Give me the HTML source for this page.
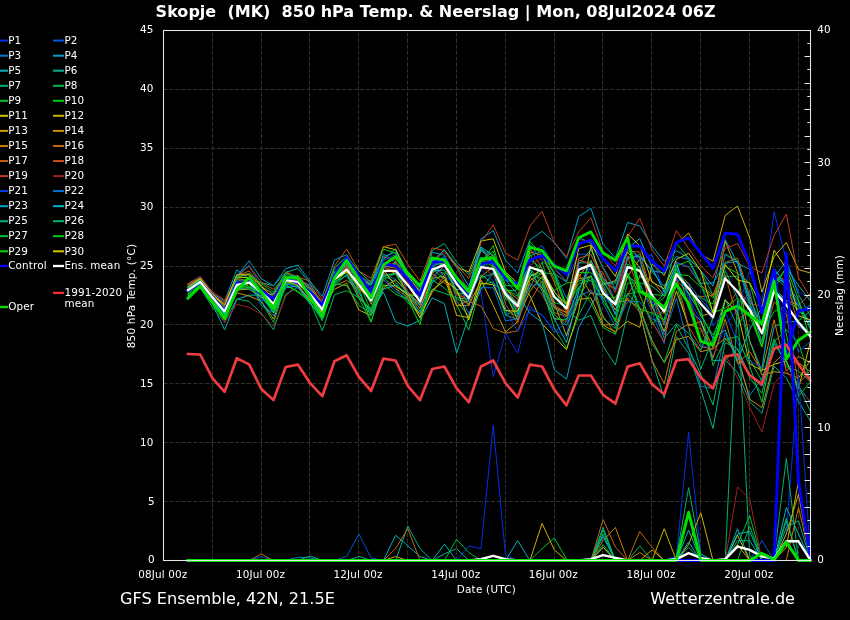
<!DOCTYPE html>
<html><head><meta charset="utf-8"><title>Skopje GFS Ensemble</title>
<style>html,body{margin:0;padding:0;background:#000;}body{width:850px;height:620px;overflow:hidden;position:relative;font-family:"DejaVu Sans","Liberation Sans",sans-serif;}</style></head>
<body>
<svg width="850" height="620" viewBox="0 0 850 620" style="position:absolute;left:0;top:0;will-change:transform">
<rect width="850" height="620" fill="#000"/>
<g stroke="#313124" stroke-width="1" stroke-dasharray="4.15 1.8" fill="none"><line x1="212.5" y1="560.5" x2="212.5" y2="30.5"/><line x1="261.5" y1="560.5" x2="261.5" y2="30.5"/><line x1="309.5" y1="560.5" x2="309.5" y2="30.5"/><line x1="358.5" y1="560.5" x2="358.5" y2="30.5"/><line x1="407.5" y1="560.5" x2="407.5" y2="30.5"/><line x1="456.5" y1="560.5" x2="456.5" y2="30.5"/><line x1="505.5" y1="560.5" x2="505.5" y2="30.5"/><line x1="554.5" y1="560.5" x2="554.5" y2="30.5"/><line x1="602.5" y1="560.5" x2="602.5" y2="30.5"/><line x1="651.5" y1="560.5" x2="651.5" y2="30.5"/><line x1="700.5" y1="560.5" x2="700.5" y2="30.5"/><line x1="749.5" y1="560.5" x2="749.5" y2="30.5"/><line x1="798.5" y1="560.5" x2="798.5" y2="30.5"/><line x1="163.5" y1="501.5" x2="810.5" y2="501.5"/><line x1="163.5" y1="442.5" x2="810.5" y2="442.5"/><line x1="163.5" y1="383.5" x2="810.5" y2="383.5"/><line x1="163.5" y1="324.5" x2="810.5" y2="324.5"/><line x1="163.5" y1="266.5" x2="810.5" y2="266.5"/><line x1="163.5" y1="207.5" x2="810.5" y2="207.5"/><line x1="163.5" y1="148.5" x2="810.5" y2="148.5"/><line x1="163.5" y1="89.5" x2="810.5" y2="89.5"/></g>
<defs><clipPath id="cp"><rect x="163.5" y="30.5" width="648.0" height="532.5"/></clipPath></defs>
<g fill="none" stroke-linejoin="round" stroke-linecap="square" clip-path="url(#cp)">
<polyline points="188.0,288.8 200.2,280.4 212.4,296.7 224.6,310.3 236.8,287.1 249.1,280.2 261.3,299.9 273.5,303.0 285.7,281.5 297.9,278.5 310.1,287.4 322.3,304.2 334.5,270.2 346.7,263.4 358.9,282.4 371.1,298.4 383.4,268.5 395.6,265.1 407.8,291.2 420.0,312.8 432.2,277.5 444.4,266.3 456.6,282.5 468.8,306.1 481.0,292.0 493.2,376.8 505.5,333.2 517.7,353.2 529.9,306.1 542.1,315.5 554.3,329.7 566.5,336.7 578.7,265.4 590.9,282.3 603.1,299.3 615.4,304.1 627.6,255.6 639.8,261.1 652.0,301.9 664.2,310.4 676.4,261.4 688.6,298.7 700.8,320.0 713.0,357.1 725.2,325.3 737.5,309.4 749.7,270.8 761.9,301.4 774.1,211.9 786.3,260.2 798.5,292.0 810.7,299.0" stroke="#0030e8" stroke-width="1.0" />
<polyline points="188.0,283.9 200.2,276.5 212.4,293.4 224.6,304.8 236.8,274.8 249.1,265.4 261.3,287.0 273.5,293.7 285.7,277.9 297.9,280.6 310.1,284.8 322.3,303.9 334.5,268.2 346.7,257.2 358.9,275.0 371.1,288.7 383.4,266.2 395.6,263.2 407.8,286.5 420.0,296.9 432.2,266.2 444.4,256.1 456.6,278.4 468.8,295.5 481.0,259.3 493.2,271.8 505.5,293.4 517.7,302.3 529.9,253.7 542.1,245.5 554.3,267.4 566.5,281.8 578.7,254.2 590.9,254.4 603.1,278.0 615.4,302.6 627.6,277.5 639.8,283.3 652.0,312.1 664.2,343.8 676.4,273.8 688.6,292.8 700.8,345.1 713.0,349.7 725.2,300.0 737.5,311.3 749.7,290.5 761.9,346.0 774.1,283.9 786.3,310.9 798.5,351.9 810.7,341.1" stroke="#0058dc" stroke-width="1.0" />
<polyline points="188.0,290.2 200.2,282.3 212.4,299.9 224.6,313.1 236.8,287.0 249.1,281.1 261.3,305.5 273.5,312.6 285.7,282.1 297.9,279.8 310.1,297.9 322.3,314.2 334.5,276.6 346.7,259.6 358.9,280.2 371.1,300.3 383.4,274.0 395.6,279.5 407.8,292.4 420.0,305.8 432.2,265.9 444.4,262.5 456.6,281.1 468.8,290.0 481.0,249.9 493.2,255.6 505.5,279.9 517.7,284.6 529.9,244.2 542.1,260.8 554.3,271.8 566.5,298.4 578.7,270.7 590.9,262.8 603.1,292.0 615.4,305.8 627.6,266.6 639.8,267.4 652.0,295.4 664.2,334.9 676.4,298.1 688.6,346.7 700.8,386.2 713.0,388.6 725.2,333.0 737.5,361.9 749.7,395.4 761.9,378.5 774.1,344.4 786.3,361.0 798.5,385.9 810.7,403.2" stroke="#0078d0" stroke-width="1.0" />
<polyline points="188.0,286.7 200.2,278.8 212.4,293.3 224.6,301.0 236.8,269.8 249.1,278.9 261.3,291.6 273.5,304.7 285.7,280.1 297.9,281.3 310.1,298.3 322.3,318.7 334.5,279.0 346.7,270.8 358.9,287.5 371.1,292.5 383.4,253.9 395.6,262.6 407.8,272.4 420.0,290.1 432.2,252.4 444.4,255.1 456.6,277.6 468.8,289.5 481.0,239.0 493.2,230.7 505.5,260.2 517.7,273.1 529.9,240.1 542.1,231.3 554.3,242.5 566.5,258.4 578.7,216.6 590.9,208.3 603.1,244.3 615.4,257.8 627.6,222.5 639.8,226.0 652.0,246.0 664.2,261.3 676.4,250.7 688.6,257.8 700.8,270.8 713.0,286.1 725.2,239.5 737.5,263.3 749.7,269.3 761.9,309.9 774.1,277.0 786.3,261.3 798.5,294.6 810.7,316.4" stroke="#00a0c8" stroke-width="1.0" />
<polyline points="188.0,287.7 200.2,283.5 212.4,303.5 224.6,330.0 236.8,299.3 249.1,295.2 261.3,295.1 273.5,312.6 285.7,284.8 297.9,281.7 310.1,289.7 322.3,305.9 334.5,273.1 346.7,267.2 358.9,296.0 371.1,310.8 383.4,292.0 395.6,322.0 407.8,326.1 420.0,320.2 432.2,297.9 444.4,303.7 456.6,353.2 468.8,316.1 481.0,289.6 493.2,272.6 505.5,309.3 517.7,316.9 529.9,267.6 542.1,269.9 554.3,291.4 566.5,309.2 578.7,264.3 590.9,249.4 603.1,278.2 615.4,289.6 627.6,258.7 639.8,254.5 652.0,271.6 664.2,286.4 676.4,261.9 688.6,308.7 700.8,320.7 713.0,360.6 725.2,359.9 737.5,349.0 749.7,375.7 761.9,386.2 774.1,326.6 786.3,322.1 798.5,321.2 810.7,334.1" stroke="#00b0b8" stroke-width="1.0" />
<polyline points="188.0,290.1 200.2,281.9 212.4,300.3 224.6,314.6 236.8,291.6 249.1,280.1 261.3,282.8 273.5,285.7 285.7,272.4 297.9,268.5 310.1,283.5 322.3,304.7 334.5,274.3 346.7,261.4 358.9,282.2 371.1,285.1 383.4,259.6 395.6,248.8 407.8,272.5 420.0,285.3 432.2,267.2 444.4,259.7 456.6,299.7 468.8,301.8 481.0,265.7 493.2,262.3 505.5,287.4 517.7,305.0 529.9,259.8 542.1,268.3 554.3,296.6 566.5,303.4 578.7,262.8 590.9,262.8 603.1,290.9 615.4,313.9 627.6,274.2 639.8,313.2 652.0,360.3 664.2,398.0 676.4,336.7 688.6,353.2 700.8,389.7 713.0,428.6 725.2,360.3 737.5,372.1 749.7,401.5 761.9,413.3 774.1,366.2 786.3,377.9 798.5,401.5 810.7,421.5" stroke="#00b090" stroke-width="1.0" />
<polyline points="188.0,295.9 200.2,287.5 212.4,307.3 224.6,322.0 236.8,299.0 249.1,301.4 261.3,313.2 273.5,329.7 285.7,294.3 297.9,287.3 310.1,304.3 322.3,313.0 334.5,275.2 346.7,257.3 358.9,284.5 371.1,298.3 383.4,267.4 395.6,263.1 407.8,275.5 420.0,286.6 432.2,250.6 444.4,243.5 456.6,262.2 468.8,274.9 481.0,246.7 493.2,266.2 505.5,315.1 517.7,319.4 529.9,276.2 542.1,272.6 554.3,274.2 566.5,309.5 578.7,320.2 590.9,315.5 603.1,346.1 615.4,365.0 627.6,313.2 639.8,275.0 652.0,293.6 664.2,322.8 676.4,285.1 688.6,327.5 700.8,369.1 713.0,338.3 725.2,299.1 737.5,326.7 749.7,305.3 761.9,341.9 774.1,276.2 786.3,287.7 798.5,313.7 810.7,304.5" stroke="#00b070" stroke-width="1.0" />
<polyline points="188.0,287.8 200.2,280.5 212.4,296.0 224.6,315.0 236.8,285.1 249.1,279.1 261.3,286.8 273.5,305.4 285.7,281.9 297.9,286.7 310.1,301.6 322.3,330.7 334.5,294.7 346.7,290.7 358.9,297.8 371.1,322.3 383.4,277.4 395.6,288.6 407.8,302.8 420.0,313.4 432.2,280.0 444.4,287.9 456.6,301.2 468.8,316.1 481.0,277.6 493.2,273.8 505.5,292.4 517.7,310.4 529.9,272.6 542.1,287.0 554.3,328.1 566.5,348.3 578.7,315.1 590.9,291.5 603.1,296.6 615.4,322.1 627.6,275.9 639.8,285.2 652.0,306.8 664.2,293.6 676.4,243.3 688.6,258.0 700.8,270.8 713.0,295.2 725.2,276.4 737.5,276.3 749.7,359.4 761.9,380.8 774.1,338.8 786.3,366.6 798.5,371.1 810.7,382.1" stroke="#00b850" stroke-width="1.0" />
<polyline points="188.0,294.8 200.2,284.8 212.4,301.0 224.6,313.9 236.8,285.0 249.1,282.9 261.3,290.6 273.5,312.6 285.7,284.2 297.9,279.5 310.1,290.3 322.3,306.6 334.5,282.6 346.7,271.8 358.9,283.4 371.1,310.7 383.4,285.3 395.6,285.7 407.8,295.2 420.0,296.2 432.2,268.6 444.4,279.3 456.6,304.5 468.8,330.1 481.0,284.1 493.2,282.1 505.5,314.5 517.7,310.1 529.9,287.8 542.1,262.2 554.3,302.7 566.5,305.9 578.7,287.2 590.9,276.1 603.1,293.1 615.4,305.3 627.6,294.2 639.8,291.2 652.0,294.6 664.2,295.3 676.4,268.6 688.6,294.2 700.8,297.7 713.0,304.0 725.2,254.0 737.5,261.0 749.7,302.6 761.9,333.6 774.1,311.4 786.3,305.7 798.5,320.9 810.7,310.7" stroke="#00c030" stroke-width="1.0" />
<polyline points="188.0,289.1 200.2,280.3 212.4,295.3 224.6,309.8 236.8,278.5 249.1,280.8 261.3,290.9 273.5,307.4 285.7,282.3 297.9,286.1 310.1,289.6 322.3,308.0 334.5,276.4 346.7,272.6 358.9,298.7 371.1,308.5 383.4,276.6 395.6,272.8 407.8,293.8 420.0,297.4 432.2,260.6 444.4,259.3 456.6,282.0 468.8,304.0 481.0,263.4 493.2,245.6 505.5,291.1 517.7,289.8 529.9,254.6 542.1,274.8 554.3,290.5 566.5,283.0 578.7,281.3 590.9,276.5 603.1,300.6 615.4,320.1 627.6,264.2 639.8,269.9 652.0,306.4 664.2,297.8 676.4,273.9 688.6,275.8 700.8,286.9 713.0,297.8 725.2,266.3 737.5,273.3 749.7,283.0 761.9,326.1 774.1,287.6 786.3,300.7 798.5,309.2 810.7,326.6" stroke="#00d010" stroke-width="1.0" />
<polyline points="188.0,284.8 200.2,278.3 212.4,293.9 224.6,307.3 236.8,277.4 249.1,277.5 261.3,292.1 273.5,295.1 285.7,280.5 297.9,278.1 310.1,292.9 322.3,310.7 334.5,276.0 346.7,264.5 358.9,279.2 371.1,284.3 383.4,246.6 395.6,249.8 407.8,275.7 420.0,291.7 432.2,261.3 444.4,250.0 456.6,267.1 468.8,272.1 481.0,241.0 493.2,238.8 505.5,272.0 517.7,283.4 529.9,295.5 542.1,323.8 554.3,336.7 566.5,349.7 578.7,310.8 590.9,246.0 603.1,284.8 615.4,280.7 627.6,252.0 639.8,267.5 652.0,306.8 664.2,331.3 676.4,291.1 688.6,325.7 700.8,321.6 713.0,347.7 725.2,300.3 737.5,312.1 749.7,363.9 761.9,370.3 774.1,364.3 786.3,361.0 798.5,388.7 810.7,340.5" stroke="#c8c800" stroke-width="1.0" />
<polyline points="188.0,289.4 200.2,283.4 212.4,299.3 224.6,320.2 236.8,290.0 249.1,289.1 261.3,297.4 273.5,298.4 285.7,276.3 297.9,283.4 310.1,294.5 322.3,309.2 334.5,289.2 346.7,283.3 358.9,310.0 371.1,315.5 383.4,287.9 395.6,279.7 407.8,292.3 420.0,308.5 432.2,278.3 444.4,276.2 456.6,315.3 468.8,317.6 481.0,276.8 493.2,266.7 505.5,293.9 517.7,320.0 529.9,290.9 542.1,276.5 554.3,303.3 566.5,335.8 578.7,299.4 590.9,297.9 603.1,325.4 615.4,331.6 627.6,321.3 639.8,327.4 652.0,263.7 664.2,275.5 676.4,243.7 688.6,233.1 700.8,254.3 713.0,261.3 725.2,215.4 737.5,206.0 749.7,237.8 761.9,292.0 774.1,256.6 786.3,242.5 798.5,269.6 810.7,273.1" stroke="#c8b000" stroke-width="1.0" />
<polyline points="188.0,289.0 200.2,282.8 212.4,300.7 224.6,318.1 236.8,292.8 249.1,296.1 261.3,301.0 273.5,319.1 285.7,283.5 297.9,280.4 310.1,296.6 322.3,311.2 334.5,279.1 346.7,266.3 358.9,288.7 371.1,299.3 383.4,266.6 395.6,273.9 407.8,292.8 420.0,303.5 432.2,268.7 444.4,273.8 456.6,305.8 468.8,305.3 481.0,280.3 493.2,305.4 505.5,332.1 517.7,321.5 529.9,280.5 542.1,273.2 554.3,307.4 566.5,312.6 578.7,276.9 590.9,260.4 603.1,288.0 615.4,310.0 627.6,276.3 639.8,259.1 652.0,294.4 664.2,313.3 676.4,272.6 688.6,283.5 700.8,316.1 713.0,312.6 725.2,241.4 737.5,272.4 749.7,340.7 761.9,375.0 774.1,371.7 786.3,373.2 798.5,378.1 810.7,359.8" stroke="#c8a000" stroke-width="1.0" />
<polyline points="188.0,291.3 200.2,280.6 212.4,295.5 224.6,309.9 236.8,278.6 249.1,286.9 261.3,291.9 273.5,303.4 285.7,277.6 297.9,278.8 310.1,288.2 322.3,303.4 334.5,272.8 346.7,265.6 358.9,289.8 371.1,293.4 383.4,263.2 395.6,264.9 407.8,297.8 420.0,314.5 432.2,292.7 444.4,276.0 456.6,305.9 468.8,300.4 481.0,263.1 493.2,260.9 505.5,289.4 517.7,299.0 529.9,277.0 542.1,288.1 554.3,308.1 566.5,315.6 578.7,274.0 590.9,293.4 603.1,294.7 615.4,303.0 627.6,300.0 639.8,307.8 652.0,340.3 664.2,362.8 676.4,339.5 688.6,336.4 700.8,351.7 713.0,348.7 725.2,337.8 737.5,355.4 749.7,399.2 761.9,407.7 774.1,362.6 786.3,351.3 798.5,362.6 810.7,372.1" stroke="#c89000" stroke-width="1.0" />
<polyline points="188.0,290.4 200.2,281.7 212.4,299.4 224.6,317.8 236.8,286.9 249.1,280.4 261.3,290.8 273.5,304.5 285.7,284.1 297.9,275.2 310.1,290.3 322.3,311.3 334.5,285.7 346.7,280.5 358.9,289.0 371.1,297.1 383.4,265.3 395.6,268.4 407.8,277.7 420.0,294.2 432.2,262.1 444.4,264.5 456.6,294.0 468.8,304.9 481.0,266.6 493.2,268.8 505.5,291.4 517.7,303.4 529.9,252.0 542.1,255.1 554.3,282.0 566.5,314.0 578.7,278.9 590.9,276.3 603.1,324.9 615.4,324.4 627.6,297.9 639.8,312.0 652.0,360.5 664.2,383.5 676.4,331.3 688.6,324.1 700.8,328.8 713.0,358.0 725.2,319.2 737.5,363.6 749.7,351.7 761.9,371.5 774.1,319.8 786.3,371.0 798.5,356.5 810.7,362.7" stroke="#c87800" stroke-width="1.0" />
<polyline points="188.0,286.9 200.2,280.8 212.4,294.8 224.6,302.9 236.8,276.1 249.1,271.0 261.3,286.1 273.5,294.3 285.7,276.1 297.9,284.6 310.1,294.3 322.3,307.3 334.5,277.2 346.7,266.1 358.9,280.9 371.1,304.6 383.4,274.6 395.6,261.3 407.8,281.2 420.0,295.0 432.2,277.3 444.4,266.0 456.6,292.3 468.8,301.1 481.0,306.1 493.2,328.5 505.5,333.2 517.7,330.8 529.9,301.4 542.1,281.1 554.3,312.7 566.5,316.4 578.7,297.1 590.9,290.0 603.1,315.9 615.4,334.3 627.6,294.3 639.8,277.0 652.0,280.6 664.2,295.1 676.4,262.3 688.6,267.2 700.8,285.1 713.0,295.5 725.2,262.4 737.5,258.1 749.7,295.5 761.9,332.8 774.1,293.0 786.3,300.5 798.5,305.1 810.7,293.2" stroke="#c06810" stroke-width="1.0" />
<polyline points="188.0,294.1 200.2,281.5 212.4,295.9 224.6,309.1 236.8,276.9 249.1,266.1 261.3,282.3 273.5,289.4 285.7,276.0 297.9,278.4 310.1,286.2 322.3,301.9 334.5,265.8 346.7,249.1 358.9,271.0 371.1,278.5 383.4,246.6 395.6,244.2 407.8,264.4 420.0,280.9 432.2,247.9 444.4,250.4 456.6,264.7 468.8,278.5 481.0,251.0 493.2,258.6 505.5,304.3 517.7,323.2 529.9,283.1 542.1,294.4 554.3,318.1 566.5,321.7 578.7,258.4 590.9,254.3 603.1,280.0 615.4,290.9 627.6,250.7 639.8,252.2 652.0,294.7 664.2,325.1 676.4,280.1 688.6,293.1 700.8,296.7 713.0,295.4 725.2,274.7 737.5,319.2 749.7,311.7 761.9,347.0 774.1,301.8 786.3,314.2 798.5,383.9 810.7,370.2" stroke="#c05810" stroke-width="1.0" />
<polyline points="188.0,284.5 200.2,279.7 212.4,293.1 224.6,305.1 236.8,275.4 249.1,273.7 261.3,291.0 273.5,304.6 285.7,271.6 297.9,277.1 310.1,281.2 322.3,299.6 334.5,275.4 346.7,268.9 358.9,296.0 371.1,312.3 383.4,280.3 395.6,288.1 407.8,297.8 420.0,307.4 432.2,273.4 444.4,283.1 456.6,283.6 468.8,294.2 481.0,263.7 493.2,254.9 505.5,297.9 517.7,302.4 529.9,248.2 542.1,268.7 554.3,305.3 566.5,312.8 578.7,260.2 590.9,263.5 603.1,273.0 615.4,301.5 627.6,256.3 639.8,295.5 652.0,321.9 664.2,341.8 676.4,277.5 688.6,326.7 700.8,347.0 713.0,349.0 725.2,313.1 737.5,290.1 749.7,303.5 761.9,306.2 774.1,276.0 786.3,280.1 798.5,326.8 810.7,333.0" stroke="#c84a1c" stroke-width="1.0" />
<polyline points="188.0,283.7 200.2,276.5 212.4,291.8 224.6,299.9 236.8,279.3 249.1,281.1 261.3,293.6 273.5,306.7 285.7,280.7 297.9,276.5 310.1,292.3 322.3,310.2 334.5,278.0 346.7,267.2 358.9,278.0 371.1,281.0 383.4,257.1 395.6,259.8 407.8,293.4 420.0,295.3 432.2,273.9 444.4,263.0 456.6,294.5 468.8,299.5 481.0,242.5 493.2,224.8 505.5,253.1 517.7,260.2 529.9,226.0 542.1,211.3 554.3,242.5 566.5,256.6 578.7,231.9 590.9,217.8 603.1,251.9 615.4,266.1 627.6,236.6 639.8,218.4 652.0,249.6 664.2,266.1 676.4,230.7 688.6,248.4 700.8,266.1 713.0,277.8 725.2,248.4 737.5,243.7 749.7,266.1 761.9,273.1 774.1,235.4 786.3,214.2 798.5,277.8 810.7,297.9" stroke="#c03c20" stroke-width="1.0" />
<polyline points="188.0,289.7 200.2,283.5 212.4,299.0 224.6,322.6 236.8,304.3 249.1,307.3 261.3,314.3 273.5,326.1 285.7,296.7 297.9,281.0 310.1,291.3 322.3,309.6 334.5,277.6 346.7,262.5 358.9,278.5 371.1,298.8 383.4,267.7 395.6,270.8 407.8,282.3 420.0,301.1 432.2,263.3 444.4,252.2 456.6,267.9 468.8,292.5 481.0,266.9 493.2,275.3 505.5,289.7 517.7,309.2 529.9,265.4 542.1,257.7 554.3,269.7 566.5,280.9 578.7,239.6 590.9,241.2 603.1,268.8 615.4,293.1 627.6,256.4 639.8,257.3 652.0,312.3 664.2,313.7 676.4,287.1 688.6,299.9 700.8,327.6 713.0,346.8 725.2,354.4 737.5,377.9 749.7,407.4 761.9,432.1 774.1,383.8 786.3,369.7 798.5,389.7 810.7,401.5" stroke="#a02020" stroke-width="1.0" />
<polyline points="188.0,286.3 200.2,279.5 212.4,297.0 224.6,309.2 236.8,276.9 249.1,274.5 261.3,291.0 273.5,310.0 285.7,286.5 297.9,285.5 310.1,302.4 322.3,317.5 334.5,282.4 346.7,260.9 358.9,277.1 371.1,282.5 383.4,260.7 395.6,254.5 407.8,279.8 420.0,293.1 432.2,265.7 444.4,276.2 456.6,284.4 468.8,302.3 481.0,269.2 493.2,281.0 505.5,310.3 517.7,331.4 529.9,309.3 542.1,314.6 554.3,332.2 566.5,322.0 578.7,295.3 590.9,291.2 603.1,298.4 615.4,289.7 627.6,245.9 639.8,260.4 652.0,254.7 664.2,295.1 676.4,262.7 688.6,266.5 700.8,283.8 713.0,325.8 725.2,311.3 737.5,343.3 749.7,361.3 761.9,367.4 774.1,288.9 786.3,301.2 798.5,325.6 810.7,336.4" stroke="#0040e0" stroke-width="1.0" />
<polyline points="188.0,289.6 200.2,279.6 212.4,296.2 224.6,308.4 236.8,281.0 249.1,281.4 261.3,302.2 273.5,315.9 285.7,283.1 297.9,288.0 310.1,299.9 322.3,310.5 334.5,278.7 346.7,264.8 358.9,277.7 371.1,297.6 383.4,279.3 395.6,291.5 407.8,299.0 420.0,311.7 432.2,282.1 444.4,258.0 456.6,291.5 468.8,313.5 481.0,287.8 493.2,287.7 505.5,320.8 517.7,318.9 529.9,285.2 542.1,284.8 554.3,306.4 566.5,319.6 578.7,289.4 590.9,266.9 603.1,303.2 615.4,326.7 627.6,301.7 639.8,301.7 652.0,318.7 664.2,325.1 676.4,279.4 688.6,283.6 700.8,299.5 713.0,313.2 725.2,254.5 737.5,263.2 749.7,306.5 761.9,321.9 774.1,269.8 786.3,284.7 798.5,304.5 810.7,324.6" stroke="#0070d8" stroke-width="1.0" />
<polyline points="188.0,287.3 200.2,279.7 212.4,296.7 224.6,317.6 236.8,276.7 249.1,260.8 261.3,278.7 273.5,285.9 285.7,268.6 297.9,265.1 310.1,281.4 322.3,296.4 334.5,260.1 346.7,254.6 358.9,275.1 371.1,284.4 383.4,256.7 395.6,252.2 407.8,277.5 420.0,293.4 432.2,262.3 444.4,249.8 456.6,266.1 468.8,286.1 481.0,249.0 493.2,264.1 505.5,279.7 517.7,294.7 529.9,313.2 542.1,322.6 554.3,369.7 566.5,379.1 578.7,327.3 590.9,306.1 603.1,283.7 615.4,314.9 627.6,257.5 639.8,256.5 652.0,270.7 664.2,273.0 676.4,256.7 688.6,259.0 700.8,283.3 713.0,283.0 725.2,263.2 737.5,261.2 749.7,299.3 761.9,324.1 774.1,268.3 786.3,287.1 798.5,306.6 810.7,322.7" stroke="#00a0d0" stroke-width="1.0" />
<polyline points="188.0,290.9 200.2,284.4 212.4,297.1 224.6,314.3 236.8,287.7 249.1,279.0 261.3,297.2 273.5,312.1 285.7,287.8 297.9,286.1 310.1,303.2 322.3,318.4 334.5,285.9 346.7,274.3 358.9,292.2 371.1,315.2 383.4,289.1 395.6,285.0 407.8,293.7 420.0,304.9 432.2,271.0 444.4,270.0 456.6,289.5 468.8,288.7 481.0,247.1 493.2,255.3 505.5,290.5 517.7,313.6 529.9,269.5 542.1,291.2 554.3,318.9 566.5,342.7 578.7,291.2 590.9,260.7 603.1,283.0 615.4,283.1 627.6,248.0 639.8,238.7 652.0,267.5 664.2,291.8 676.4,264.9 688.6,294.0 700.8,313.5 713.0,338.4 725.2,330.0 737.5,360.6 749.7,329.5 761.9,307.0 774.1,277.0 786.3,283.4 798.5,301.1 810.7,330.2" stroke="#00b8c0" stroke-width="1.0" />
<polyline points="188.0,287.9 200.2,281.6 212.4,296.5 224.6,310.2 236.8,288.4 249.1,288.9 261.3,295.8 273.5,293.5 285.7,274.4 297.9,276.3 310.1,289.2 322.3,307.5 334.5,272.3 346.7,263.0 358.9,284.6 371.1,302.7 383.4,275.6 395.6,273.5 407.8,286.4 420.0,293.4 432.2,260.5 444.4,258.2 456.6,281.1 468.8,294.9 481.0,274.9 493.2,283.6 505.5,292.0 517.7,304.0 529.9,255.8 542.1,251.4 554.3,273.8 566.5,281.8 578.7,237.5 590.9,243.2 603.1,267.2 615.4,289.3 627.6,247.5 639.8,257.4 652.0,303.7 664.2,338.4 676.4,323.6 688.6,333.3 700.8,350.5 713.0,318.0 725.2,270.6 737.5,298.2 749.7,340.6 761.9,370.6 774.1,285.1 786.3,267.8 798.5,285.5 810.7,301.3" stroke="#00b088" stroke-width="1.0" />
<polyline points="188.0,291.4 200.2,281.4 212.4,299.3 224.6,317.9 236.8,285.8 249.1,287.8 261.3,292.4 273.5,304.7 285.7,276.7 297.9,276.8 310.1,296.6 322.3,308.8 334.5,282.3 346.7,275.5 358.9,297.6 371.1,311.4 383.4,275.9 395.6,282.0 407.8,299.3 420.0,317.1 432.2,282.8 444.4,272.6 456.6,277.6 468.8,287.8 481.0,257.4 493.2,262.9 505.5,295.3 517.7,315.9 529.9,274.5 542.1,278.1 554.3,314.7 566.5,325.3 578.7,298.7 590.9,275.2 603.1,318.3 615.4,328.5 627.6,293.5 639.8,308.9 652.0,343.6 664.2,362.2 676.4,324.9 688.6,348.5 700.8,374.4 713.0,405.0 725.2,342.6 737.5,348.5 749.7,377.9 761.9,393.3 774.1,342.6 786.3,362.6 798.5,386.2 810.7,412.1" stroke="#00b868" stroke-width="1.0" />
<polyline points="188.0,293.9 200.2,282.4 212.4,295.9 224.6,309.4 236.8,289.1 249.1,283.7 261.3,301.7 273.5,322.4 285.7,284.6 297.9,292.3 310.1,302.0 322.3,320.7 334.5,283.8 346.7,285.7 358.9,305.7 371.1,313.2 383.4,279.1 395.6,273.7 407.8,294.7 420.0,311.4 432.2,289.1 444.4,293.3 456.6,297.7 468.8,299.3 481.0,268.7 493.2,257.2 505.5,299.4 517.7,303.8 529.9,268.4 542.1,283.2 554.3,319.0 566.5,319.8 578.7,287.8 590.9,302.7 603.1,327.6 615.4,334.2 627.6,283.2 639.8,282.8 652.0,286.3 664.2,296.0 676.4,269.9 688.6,288.2 700.8,308.1 713.0,365.5 725.2,339.8 737.5,336.6 749.7,366.0 761.9,402.1 774.1,341.7 786.3,329.8 798.5,342.1 810.7,382.7" stroke="#00c040" stroke-width="1.0" />
<polyline points="188.0,288.3 200.2,279.9 212.4,297.3 224.6,310.0 236.8,277.4 249.1,273.8 261.3,283.7 273.5,292.1 285.7,272.5 297.9,279.3 310.1,295.3 322.3,304.9 334.5,268.0 346.7,256.2 358.9,271.1 371.1,282.4 383.4,249.2 395.6,252.9 407.8,278.9 420.0,294.3 432.2,263.6 444.4,262.9 456.6,292.8 468.8,294.8 481.0,261.4 493.2,251.0 505.5,285.3 517.7,286.5 529.9,241.4 542.1,255.3 554.3,278.5 566.5,305.3 578.7,283.6 590.9,280.3 603.1,297.9 615.4,297.6 627.6,273.2 639.8,294.7 652.0,324.8 664.2,308.4 676.4,272.4 688.6,287.7 700.8,315.8 713.0,335.1 725.2,311.0 737.5,305.5 749.7,315.8 761.9,347.1 774.1,285.1 786.3,333.8 798.5,396.1 810.7,381.4" stroke="#00c818" stroke-width="1.0" />
<polyline points="188.0,293.4 200.2,283.0 212.4,296.4 224.6,308.4 236.8,287.6 249.1,286.7 261.3,292.2 273.5,312.8 285.7,285.0 297.9,291.3 310.1,300.6 322.3,314.3 334.5,284.3 346.7,270.1 358.9,288.9 371.1,321.6 383.4,284.4 395.6,294.1 407.8,299.7 420.0,324.6 432.2,273.1 444.4,260.5 456.6,276.5 468.8,292.7 481.0,259.5 493.2,266.5 505.5,288.7 517.7,296.4 529.9,248.5 542.1,249.8 554.3,273.7 566.5,304.6 578.7,272.3 590.9,272.9 603.1,281.2 615.4,301.8 627.6,273.9 639.8,308.8 652.0,313.2 664.2,319.8 676.4,265.9 688.6,261.1 700.8,284.2 713.0,312.6 725.2,308.2 737.5,298.1 749.7,309.7 761.9,346.8 774.1,289.1 786.3,267.1 798.5,299.9 810.7,341.2" stroke="#00d800" stroke-width="1.0" />
<polyline points="188.0,286.7 200.2,278.8 212.4,294.1 224.6,305.0 236.8,274.9 249.1,274.8 261.3,286.2 273.5,298.2 285.7,279.7 297.9,285.5 310.1,300.1 322.3,312.4 334.5,280.1 346.7,272.1 358.9,280.8 371.1,293.4 383.4,269.4 395.6,286.4 407.8,294.4 420.0,318.2 432.2,290.3 444.4,280.4 456.6,289.5 468.8,319.9 481.0,282.9 493.2,284.8 505.5,310.7 517.7,311.2 529.9,276.6 542.1,269.9 554.3,292.1 566.5,304.1 578.7,248.6 590.9,245.1 603.1,259.4 615.4,276.4 627.6,234.0 639.8,245.6 652.0,282.1 664.2,288.8 676.4,259.4 688.6,253.2 700.8,270.7 713.0,312.6 725.2,264.5 737.5,280.0 749.7,282.8 761.9,307.5 774.1,250.2 786.3,268.6 798.5,315.7 810.7,320.1" stroke="#d0c800" stroke-width="1.0" />
<polyline points="188.0,290.8 200.2,282.5 212.4,296.7 224.6,310.8 236.8,283.7 249.1,281.4 261.3,290.8 273.5,299.0 285.7,279.0 297.9,282.5 310.1,292.0 322.3,304.9 334.5,275.5 346.7,257.8 358.9,275.5 371.1,292.0 383.4,263.7 395.6,266.1 407.8,279.0 420.0,295.5 432.2,262.5 444.4,261.3 456.6,279.0 468.8,295.5 481.0,263.7 493.2,261.9 505.5,277.8 517.7,284.3 529.9,260.2 542.1,255.5 554.3,264.9 566.5,274.3 578.7,243.7 590.9,240.1 603.1,259.0 615.4,270.8 627.6,246.0 639.8,246.0 652.0,261.3 664.2,270.8 676.4,242.5 688.6,237.8 700.8,253.1 713.0,268.4 725.2,233.1 737.5,234.3 749.7,263.7 761.9,313.2 774.1,269.6 786.3,355.6 798.5,310.8 810.7,308.5" stroke="#0000ff" stroke-width="2.9" />
<polyline points="188.0,290.3 200.2,282.0 212.4,297.3 224.6,311.4 236.8,284.9 249.1,282.5 261.3,292.0 273.5,303.7 285.7,280.2 297.9,282.0 310.1,294.3 322.3,309.6 334.5,279.0 346.7,269.6 358.9,284.9 371.1,300.2 383.4,270.8 395.6,270.8 407.8,284.9 420.0,301.4 432.2,269.6 444.4,264.9 456.6,283.7 468.8,297.9 481.0,267.2 493.2,269.0 505.5,294.3 517.7,306.1 529.9,267.2 542.1,271.4 554.3,296.7 566.5,308.5 578.7,269.6 590.9,264.9 603.1,293.1 615.4,304.3 627.6,267.2 639.8,270.8 652.0,295.5 664.2,311.4 676.4,274.3 688.6,288.4 700.8,303.7 713.0,317.3 725.2,278.4 737.5,291.4 749.7,309.6 761.9,333.2 774.1,290.8 786.3,304.9 798.5,322.6 810.7,336.7" stroke="#ffffff" stroke-width="2.25" />
<polyline points="188.0,298.3 200.2,286.1 212.4,302.6 224.6,318.3 236.8,289.6 249.1,277.8 261.3,292.0 273.5,308.5 285.7,277.8 297.9,277.8 310.1,296.7 322.3,316.7 334.5,277.8 346.7,260.2 358.9,279.0 371.1,297.9 383.4,264.9 395.6,256.6 407.8,273.1 420.0,286.1 432.2,257.8 444.4,260.2 456.6,277.8 468.8,292.0 481.0,259.0 493.2,257.8 505.5,274.3 517.7,288.4 529.9,247.2 542.1,250.7 554.3,266.1 566.5,270.8 578.7,237.8 590.9,231.9 603.1,253.1 615.4,260.2 627.6,237.8 639.8,291.4 652.0,297.9 664.2,307.3 676.4,283.7 688.6,303.7 700.8,341.4 713.0,345.0 725.2,311.4 737.5,306.1 749.7,315.5 761.9,323.8 774.1,281.4 786.3,359.1 798.5,340.3 810.7,332.0" stroke="#00e000" stroke-width="2.9" />
<polyline points="188.0,354.0 200.2,354.5 212.4,378.1 224.6,391.8 236.8,358.2 249.1,364.4 261.3,389.0 273.5,400.1 285.7,367.0 297.9,364.6 310.1,383.2 322.3,396.2 334.5,361.2 346.7,355.3 358.9,376.8 371.1,391.0 383.4,358.6 395.6,360.5 407.8,385.8 420.0,400.1 432.2,369.0 444.4,366.5 456.6,388.4 468.8,402.2 481.0,366.5 493.2,360.5 505.5,383.2 517.7,397.5 529.9,364.6 542.1,366.5 554.3,389.7 566.5,405.3 578.7,375.5 590.9,375.5 603.1,394.9 615.4,403.7 627.6,366.6 639.8,363.2 652.0,384.3 664.2,394.2 676.4,360.5 688.6,359.2 700.8,377.7 713.0,388.3 725.2,356.5 737.5,354.4 749.7,375.1 761.9,384.3 774.1,348.6 786.3,344.6 798.5,364.5 810.7,380.3" stroke="#ee3c40" stroke-width="2.7" />
<polyline points="188.0,560.5 200.2,560.5 212.4,560.5 224.6,560.5 236.8,560.5 249.1,560.5 261.3,560.5 273.5,560.5 285.7,560.5 297.9,560.5 310.1,560.5 322.3,560.5 334.5,560.5 346.7,560.5 358.9,560.5 371.1,560.5 383.4,560.5 395.6,560.5 407.8,560.5 420.0,560.5 432.2,560.5 444.4,560.5 456.6,560.5 468.8,545.9 481.0,548.6 493.2,425.4 505.5,555.2 517.7,560.5 529.9,560.5 542.1,560.5 554.3,560.5 566.5,560.5 578.7,560.5 590.9,560.5 603.1,560.5 615.4,560.5 627.6,560.5 639.8,560.5 652.0,560.5 664.2,560.5 676.4,556.5 688.6,432.0 700.8,555.2 713.0,560.5 725.2,560.5 737.5,560.5 749.7,560.5 761.9,560.5 774.1,560.5 786.3,534.0 798.5,375.0 810.7,560.5" stroke="#0030e8" stroke-width="1.0" />
<polyline points="188.0,560.5 200.2,560.5 212.4,560.5 224.6,560.5 236.8,560.5 249.1,560.5 261.3,556.5 273.5,560.5 285.7,560.5 297.9,560.5 310.1,560.5 322.3,560.5 334.5,560.5 346.7,556.5 358.9,534.0 371.1,557.9 383.4,560.5 395.6,560.5 407.8,560.5 420.0,560.5 432.2,560.5 444.4,560.5 456.6,560.5 468.8,560.5 481.0,560.5 493.2,560.5 505.5,560.5 517.7,560.5 529.9,560.5 542.1,560.5 554.3,560.5 566.5,560.5 578.7,560.5 590.9,560.5 603.1,560.5 615.4,560.5 627.6,560.5 639.8,560.5 652.0,560.5 664.2,560.5 676.4,560.5 688.6,560.5 700.8,560.5 713.0,560.5 725.2,560.5 737.5,560.5 749.7,560.5 761.9,540.6 774.1,560.5 786.3,560.5 798.5,560.5 810.7,560.5" stroke="#0058dc" stroke-width="1.0" />
<polyline points="188.0,560.5 200.2,560.5 212.4,560.5 224.6,560.5 236.8,560.5 249.1,560.5 261.3,560.5 273.5,560.5 285.7,560.5 297.9,557.2 310.1,557.9 322.3,560.5 334.5,560.5 346.7,560.5 358.9,560.5 371.1,560.5 383.4,560.5 395.6,560.5 407.8,560.5 420.0,560.5 432.2,560.5 444.4,560.5 456.6,560.5 468.8,560.5 481.0,560.5 493.2,560.5 505.5,560.5 517.7,560.5 529.9,560.5 542.1,560.5 554.3,560.5 566.5,560.5 578.7,560.5 590.9,560.5 603.1,560.5 615.4,560.5 627.6,560.5 639.8,560.5 652.0,560.5 664.2,560.5 676.4,560.5 688.6,560.5 700.8,560.5 713.0,560.5 725.2,560.5 737.5,560.5 749.7,560.5 761.9,560.5 774.1,560.5 786.3,560.5 798.5,560.5 810.7,560.5" stroke="#0078d0" stroke-width="1.0" />
<polyline points="188.0,560.5 200.2,560.5 212.4,560.5 224.6,560.5 236.8,560.5 249.1,560.5 261.3,560.5 273.5,560.5 285.7,560.5 297.9,560.5 310.1,560.5 322.3,560.5 334.5,560.5 346.7,560.5 358.9,560.5 371.1,560.5 383.4,560.5 395.6,535.3 407.8,545.9 420.0,556.5 432.2,560.5 444.4,544.1 456.6,560.5 468.8,560.5 481.0,560.5 493.2,560.5 505.5,560.5 517.7,540.6 529.9,560.5 542.1,560.5 554.3,560.5 566.5,560.5 578.7,560.5 590.9,560.5 603.1,527.4 615.4,560.5 627.6,560.5 639.8,560.5 652.0,560.5 664.2,560.5 676.4,560.5 688.6,530.0 700.8,560.5 713.0,560.5 725.2,560.5 737.5,528.7 749.7,560.5 761.9,560.5 774.1,560.5 786.3,520.8 798.5,560.5 810.7,560.5" stroke="#00b0b8" stroke-width="1.0" />
<polyline points="188.0,560.5 200.2,560.5 212.4,560.5 224.6,560.5 236.8,560.5 249.1,560.5 261.3,560.5 273.5,560.5 285.7,560.5 297.9,560.5 310.1,555.9 322.3,560.5 334.5,560.5 346.7,560.5 358.9,556.5 371.1,560.5 383.4,560.5 395.6,560.5 407.8,526.0 420.0,548.6 432.2,560.5 444.4,560.5 456.6,560.5 468.8,560.5 481.0,560.5 493.2,560.5 505.5,560.5 517.7,560.5 529.9,560.5 542.1,560.5 554.3,560.5 566.5,560.5 578.7,560.5 590.9,560.5 603.1,534.0 615.4,560.5 627.6,560.5 639.8,560.5 652.0,560.5 664.2,560.5 676.4,560.5 688.6,560.5 700.8,560.5 713.0,560.5 725.2,560.5 737.5,560.5 749.7,560.5 761.9,560.5 774.1,560.5 786.3,560.5 798.5,560.5 810.7,560.5" stroke="#00b090" stroke-width="1.0" />
<polyline points="188.0,560.5 200.2,560.5 212.4,560.5 224.6,560.5 236.8,560.5 249.1,560.5 261.3,560.5 273.5,560.5 285.7,560.5 297.9,560.5 310.1,560.5 322.3,560.5 334.5,560.5 346.7,560.5 358.9,560.5 371.1,560.5 383.4,560.5 395.6,560.5 407.8,560.5 420.0,560.5 432.2,560.5 444.4,560.5 456.6,560.5 468.8,560.5 481.0,560.5 493.2,560.5 505.5,560.5 517.7,560.5 529.9,560.5 542.1,560.5 554.3,560.5 566.5,560.5 578.7,560.5 590.9,560.5 603.1,547.2 615.4,560.5 627.6,560.5 639.8,560.5 652.0,560.5 664.2,560.5 676.4,557.9 688.6,487.6 700.8,553.9 713.0,560.5 725.2,560.5 737.5,300.8 749.7,556.5 761.9,560.5 774.1,557.9 786.3,458.5 798.5,560.5 810.7,560.5" stroke="#00b070" stroke-width="1.0" />
<polyline points="188.0,560.5 200.2,560.5 212.4,560.5 224.6,560.5 236.8,560.5 249.1,560.5 261.3,560.5 273.5,560.5 285.7,560.5 297.9,560.5 310.1,560.5 322.3,560.5 334.5,560.5 346.7,560.5 358.9,560.5 371.1,560.5 383.4,560.5 395.6,560.5 407.8,560.5 420.0,560.5 432.2,560.5 444.4,560.5 456.6,560.5 468.8,560.5 481.0,560.5 493.2,560.5 505.5,560.5 517.7,560.5 529.9,560.5 542.1,560.5 554.3,560.5 566.5,560.5 578.7,560.5 590.9,560.5 603.1,544.6 615.4,560.5 627.6,560.5 639.8,545.9 652.0,560.5 664.2,560.5 676.4,560.5 688.6,560.5 700.8,560.5 713.0,560.5 725.2,560.5 737.5,560.5 749.7,526.0 761.9,560.5 774.1,560.5 786.3,518.1 798.5,560.5 810.7,560.5" stroke="#00b850" stroke-width="1.0" />
<polyline points="188.0,560.5 200.2,560.5 212.4,560.5 224.6,560.5 236.8,560.5 249.1,560.5 261.3,560.5 273.5,560.5 285.7,560.5 297.9,560.5 310.1,560.5 322.3,560.5 334.5,560.5 346.7,560.5 358.9,560.5 371.1,560.5 383.4,560.5 395.6,560.5 407.8,560.5 420.0,560.5 432.2,560.5 444.4,560.5 456.6,539.3 468.8,552.5 481.0,560.5 493.2,560.5 505.5,560.5 517.7,560.5 529.9,560.5 542.1,548.6 554.3,538.0 566.5,559.2 578.7,560.5 590.9,560.5 603.1,530.0 615.4,560.5 627.6,560.5 639.8,560.5 652.0,560.5 664.2,560.5 676.4,560.5 688.6,560.5 700.8,560.5 713.0,560.5 725.2,560.5 737.5,544.6 749.7,515.5 761.9,560.5 774.1,560.5 786.3,560.5 798.5,560.5 810.7,560.5" stroke="#00c030" stroke-width="1.0" />
<polyline points="188.0,560.5 200.2,560.5 212.4,560.5 224.6,560.5 236.8,560.5 249.1,560.5 261.3,560.5 273.5,560.5 285.7,560.5 297.9,560.5 310.1,560.5 322.3,560.5 334.5,560.5 346.7,560.5 358.9,560.5 371.1,560.5 383.4,560.5 395.6,560.5 407.8,560.5 420.0,560.5 432.2,560.5 444.4,560.5 456.6,560.5 468.8,560.5 481.0,560.5 493.2,560.5 505.5,560.5 517.7,560.5 529.9,560.5 542.1,523.4 554.3,549.9 566.5,560.5 578.7,560.5 590.9,560.5 603.1,560.5 615.4,560.5 627.6,560.5 639.8,560.5 652.0,560.5 664.2,528.7 676.4,560.5 688.6,544.6 700.8,512.8 713.0,560.5 725.2,560.5 737.5,535.3 749.7,560.5 761.9,560.5 774.1,560.5 786.3,547.2 798.5,481.0 810.7,560.5" stroke="#c8b000" stroke-width="1.0" />
<polyline points="188.0,560.5 200.2,560.5 212.4,560.5 224.6,560.5 236.8,560.5 249.1,560.5 261.3,560.5 273.5,560.5 285.7,560.5 297.9,560.5 310.1,560.5 322.3,560.5 334.5,560.5 346.7,560.5 358.9,560.5 371.1,560.5 383.4,560.5 395.6,556.5 407.8,560.5 420.0,560.5 432.2,560.5 444.4,560.5 456.6,560.5 468.8,560.5 481.0,560.5 493.2,560.5 505.5,560.5 517.7,560.5 529.9,560.5 542.1,560.5 554.3,560.5 566.5,560.5 578.7,560.5 590.9,560.5 603.1,547.2 615.4,560.5 627.6,560.5 639.8,560.5 652.0,549.9 664.2,560.5 676.4,560.5 688.6,560.5 700.8,560.5 713.0,560.5 725.2,560.5 737.5,544.6 749.7,560.5 761.9,560.5 774.1,560.5 786.3,534.0 798.5,494.2 810.7,560.5" stroke="#c8a000" stroke-width="1.0" />
<polyline points="188.0,560.5 200.2,560.5 212.4,560.5 224.6,560.5 236.8,560.5 249.1,560.5 261.3,560.5 273.5,560.5 285.7,560.5 297.9,560.5 310.1,560.5 322.3,560.5 334.5,560.5 346.7,560.5 358.9,560.5 371.1,560.5 383.4,560.5 395.6,560.5 407.8,560.5 420.0,560.5 432.2,560.5 444.4,560.5 456.6,560.5 468.8,560.5 481.0,560.5 493.2,560.5 505.5,560.5 517.7,560.5 529.9,560.5 542.1,560.5 554.3,560.5 566.5,560.5 578.7,560.5 590.9,560.5 603.1,540.6 615.4,527.4 627.6,560.5 639.8,552.5 652.0,560.5 664.2,560.5 676.4,560.5 688.6,560.5 700.8,560.5 713.0,560.5 725.2,560.5 737.5,560.5 749.7,560.5 761.9,560.5 774.1,560.5 786.3,560.5 798.5,507.5 810.7,560.5" stroke="#c87800" stroke-width="1.0" />
<polyline points="188.0,560.5 200.2,560.5 212.4,560.5 224.6,560.5 236.8,560.5 249.1,560.5 261.3,553.9 273.5,560.5 285.7,560.5 297.9,560.5 310.1,560.5 322.3,560.5 334.5,560.5 346.7,560.5 358.9,560.5 371.1,560.5 383.4,560.5 395.6,548.6 407.8,528.7 420.0,560.5 432.2,560.5 444.4,560.5 456.6,560.5 468.8,560.5 481.0,560.5 493.2,560.5 505.5,560.5 517.7,560.5 529.9,560.5 542.1,560.5 554.3,560.5 566.5,560.5 578.7,560.5 590.9,560.5 603.1,519.4 615.4,547.2 627.6,560.5 639.8,531.4 652.0,547.2 664.2,560.5 676.4,560.5 688.6,560.5 700.8,560.5 713.0,560.5 725.2,560.5 737.5,560.5 749.7,560.5 761.9,560.5 774.1,560.5 786.3,560.5 798.5,560.5 810.7,560.5" stroke="#c06810" stroke-width="1.0" />
<polyline points="188.0,560.5 200.2,560.5 212.4,560.5 224.6,560.5 236.8,560.5 249.1,560.5 261.3,560.5 273.5,560.5 285.7,560.5 297.9,560.5 310.1,560.5 322.3,560.5 334.5,560.5 346.7,560.5 358.9,560.5 371.1,560.5 383.4,560.5 395.6,560.5 407.8,560.5 420.0,560.5 432.2,560.5 444.4,560.5 456.6,560.5 468.8,560.5 481.0,560.5 493.2,560.5 505.5,560.5 517.7,560.5 529.9,560.5 542.1,560.5 554.3,560.5 566.5,560.5 578.7,560.5 590.9,560.5 603.1,560.5 615.4,560.5 627.6,560.5 639.8,560.5 652.0,560.5 664.2,560.5 676.4,560.5 688.6,560.5 700.8,560.5 713.0,560.5 725.2,560.5 737.5,487.0 749.7,498.9 761.9,560.5 774.1,560.5 786.3,560.5 798.5,560.5 810.7,560.5" stroke="#a02020" stroke-width="1.0" />
<polyline points="188.0,560.5 200.2,560.5 212.4,560.5 224.6,560.5 236.8,560.5 249.1,560.5 261.3,560.5 273.5,560.5 285.7,560.5 297.9,560.5 310.1,560.5 322.3,560.5 334.5,560.5 346.7,560.5 358.9,560.5 371.1,560.5 383.4,560.5 395.6,560.5 407.8,560.5 420.0,560.5 432.2,560.5 444.4,560.5 456.6,560.5 468.8,560.5 481.0,560.5 493.2,560.5 505.5,560.5 517.7,560.5 529.9,560.5 542.1,560.5 554.3,560.5 566.5,560.5 578.7,560.5 590.9,560.5 603.1,536.6 615.4,560.5 627.6,560.5 639.8,560.5 652.0,560.5 664.2,560.5 676.4,560.5 688.6,542.0 700.8,560.5 713.0,560.5 725.2,560.5 737.5,534.0 749.7,531.4 761.9,560.5 774.1,560.5 786.3,507.5 798.5,534.0 810.7,560.5" stroke="#00b8c0" stroke-width="1.0" />
<polyline points="188.0,560.5 200.2,560.5 212.4,560.5 224.6,560.5 236.8,560.5 249.1,560.5 261.3,560.5 273.5,560.5 285.7,560.5 297.9,560.5 310.1,560.5 322.3,560.5 334.5,560.5 346.7,560.5 358.9,560.5 371.1,560.5 383.4,560.5 395.6,560.5 407.8,560.5 420.0,560.5 432.2,560.5 444.4,553.9 456.6,548.6 468.8,560.5 481.0,560.5 493.2,560.5 505.5,560.5 517.7,560.5 529.9,560.5 542.1,560.5 554.3,560.5 566.5,560.5 578.7,560.5 590.9,560.5 603.1,560.5 615.4,560.5 627.6,560.5 639.8,560.5 652.0,560.5 664.2,560.5 676.4,560.5 688.6,547.2 700.8,560.5 713.0,560.5 725.2,560.5 737.5,540.6 749.7,540.6 761.9,560.5 774.1,560.5 786.3,527.4 798.5,520.8 810.7,560.5" stroke="#00b088" stroke-width="1.0" />
<polyline points="188.0,560.5 200.2,560.5 212.4,560.5 224.6,560.5 236.8,560.5 249.1,560.5 261.3,560.5 273.5,560.5 285.7,560.5 297.9,560.5 310.1,560.5 322.3,560.5 334.5,560.5 346.7,560.5 358.9,560.5 371.1,560.5 383.4,560.5 395.6,560.5 407.8,560.5 420.0,560.5 432.2,560.5 444.4,560.5 456.6,560.5 468.8,560.5 481.0,560.5 493.2,560.5 505.5,560.5 517.7,560.5 529.9,560.5 542.1,560.5 554.3,560.5 566.5,560.5 578.7,560.5 590.9,560.5 603.1,560.5 615.4,560.5 627.6,560.5 639.8,560.5 652.0,560.5 664.2,560.5 676.4,560.5 688.6,560.5 700.8,560.5 713.0,560.5 725.2,560.5 737.5,560.5 749.7,560.5 761.9,560.5 774.1,560.5 786.3,253.1 798.5,481.0 810.7,560.5" stroke="#0000ff" stroke-width="2.9" />
<polyline points="188.0,560.5 200.2,560.5 212.4,560.5 224.6,560.5 236.8,560.5 249.1,560.5 261.3,560.5 273.5,560.5 285.7,560.5 297.9,560.5 310.1,560.5 322.3,560.5 334.5,560.5 346.7,560.5 358.9,560.5 371.1,560.5 383.4,560.5 395.6,560.5 407.8,560.5 420.0,560.5 432.2,560.5 444.4,560.5 456.6,560.5 468.8,560.5 481.0,559.2 493.2,555.9 505.5,559.2 517.7,560.5 529.9,560.5 542.1,560.5 554.3,560.5 566.5,560.5 578.7,560.5 590.9,559.2 603.1,555.2 615.4,557.9 627.6,560.5 639.8,560.5 652.0,560.5 664.2,560.5 676.4,559.2 688.6,553.2 700.8,557.9 713.0,560.5 725.2,559.2 737.5,546.6 749.7,549.9 761.9,556.5 774.1,558.5 786.3,541.3 798.5,541.3 810.7,560.5" stroke="#ffffff" stroke-width="2.4" />
<polyline points="188.0,560.5 200.2,560.5 212.4,560.5 224.6,560.5 236.8,560.5 249.1,560.5 261.3,560.5 273.5,560.5 285.7,560.5 297.9,560.5 310.1,560.5 322.3,560.5 334.5,560.5 346.7,560.5 358.9,560.5 371.1,560.5 383.4,560.5 395.6,560.5 407.8,560.5 420.0,560.5 432.2,560.5 444.4,560.5 456.6,560.5 468.8,560.5 481.0,560.5 493.2,560.5 505.5,560.5 517.7,560.5 529.9,560.5 542.1,560.5 554.3,560.5 566.5,560.5 578.7,560.5 590.9,560.5 603.1,560.5 615.4,560.5 627.6,560.5 639.8,560.5 652.0,560.5 664.2,560.5 676.4,560.5 688.6,512.3 700.8,560.5 713.0,560.5 725.2,560.5 737.5,560.5 749.7,560.5 761.9,553.2 774.1,559.8 786.3,542.0 798.5,560.5 810.7,560.5" stroke="#00e000" stroke-width="3.0" />
</g>
<rect x="163.5" y="30.5" width="647.0" height="530.0" fill="none" stroke="#e8e8e8" stroke-width="1.05"/>
<g stroke="#ececec" stroke-width="1"><line x1="804.5" y1="560.5" x2="810.5" y2="560.5"/><line x1="807.3" y1="546.5" x2="810.5" y2="546.5"/><line x1="804.5" y1="533.5" x2="810.5" y2="533.5"/><line x1="807.3" y1="520.5" x2="810.5" y2="520.5"/><line x1="804.5" y1="507.5" x2="810.5" y2="507.5"/><line x1="807.3" y1="493.5" x2="810.5" y2="493.5"/><line x1="804.5" y1="480.5" x2="810.5" y2="480.5"/><line x1="807.3" y1="467.5" x2="810.5" y2="467.5"/><line x1="804.5" y1="454.5" x2="810.5" y2="454.5"/><line x1="807.3" y1="440.5" x2="810.5" y2="440.5"/><line x1="804.5" y1="427.5" x2="810.5" y2="427.5"/><line x1="807.3" y1="414.5" x2="810.5" y2="414.5"/><line x1="804.5" y1="401.5" x2="810.5" y2="401.5"/><line x1="807.3" y1="387.5" x2="810.5" y2="387.5"/><line x1="804.5" y1="374.5" x2="810.5" y2="374.5"/><line x1="807.3" y1="361.5" x2="810.5" y2="361.5"/><line x1="804.5" y1="348.5" x2="810.5" y2="348.5"/><line x1="807.3" y1="334.5" x2="810.5" y2="334.5"/><line x1="804.5" y1="321.5" x2="810.5" y2="321.5"/><line x1="807.3" y1="308.5" x2="810.5" y2="308.5"/><line x1="804.5" y1="295.5" x2="810.5" y2="295.5"/><line x1="807.3" y1="281.5" x2="810.5" y2="281.5"/><line x1="804.5" y1="268.5" x2="810.5" y2="268.5"/><line x1="807.3" y1="255.5" x2="810.5" y2="255.5"/><line x1="804.5" y1="242.5" x2="810.5" y2="242.5"/><line x1="807.3" y1="228.5" x2="810.5" y2="228.5"/><line x1="804.5" y1="215.5" x2="810.5" y2="215.5"/><line x1="807.3" y1="202.5" x2="810.5" y2="202.5"/><line x1="804.5" y1="189.5" x2="810.5" y2="189.5"/><line x1="807.3" y1="175.5" x2="810.5" y2="175.5"/><line x1="804.5" y1="162.5" x2="810.5" y2="162.5"/><line x1="807.3" y1="149.5" x2="810.5" y2="149.5"/><line x1="804.5" y1="136.5" x2="810.5" y2="136.5"/><line x1="807.3" y1="122.5" x2="810.5" y2="122.5"/><line x1="804.5" y1="109.5" x2="810.5" y2="109.5"/><line x1="807.3" y1="96.5" x2="810.5" y2="96.5"/><line x1="804.5" y1="83.5" x2="810.5" y2="83.5"/><line x1="807.3" y1="69.5" x2="810.5" y2="69.5"/><line x1="804.5" y1="56.5" x2="810.5" y2="56.5"/><line x1="807.3" y1="43.5" x2="810.5" y2="43.5"/><line x1="804.5" y1="30.5" x2="810.5" y2="30.5"/></g>
<g fill="#fff" font-family="DejaVu Sans, Liberation Sans, sans-serif" font-size="10.4px" letter-spacing="0.25">
<text x="154.7" y="563.4" text-anchor="end" letter-spacing="0">0</text>
<text x="154.7" y="504.5" text-anchor="end" letter-spacing="0">5</text>
<text x="153.3" y="445.6" text-anchor="end" letter-spacing="0">10</text>
<text x="153.3" y="386.7" text-anchor="end" letter-spacing="0">15</text>
<text x="153.3" y="327.8" text-anchor="end" letter-spacing="0">20</text>
<text x="153.3" y="269.0" text-anchor="end" letter-spacing="0">25</text>
<text x="153.3" y="210.1" text-anchor="end" letter-spacing="0">30</text>
<text x="153.3" y="151.2" text-anchor="end" letter-spacing="0">35</text>
<text x="153.3" y="92.3" text-anchor="end" letter-spacing="0">40</text>
<text x="153.3" y="33.4" text-anchor="end" letter-spacing="0">45</text>
<text x="817.3" y="563.0" letter-spacing="0">0</text>
<text x="817.3" y="430.5" letter-spacing="0">10</text>
<text x="817.3" y="298.0" letter-spacing="0">20</text>
<text x="817.3" y="165.5" letter-spacing="0">30</text>
<text x="817.3" y="33.0" letter-spacing="0">40</text>
<text x="162.8" y="577.7" text-anchor="middle" letter-spacing="0.15">08Jul 00z</text>
<text x="260.5" y="577.7" text-anchor="middle" letter-spacing="0.15">10Jul 00z</text>
<text x="358.1" y="577.7" text-anchor="middle" letter-spacing="0.15">12Jul 00z</text>
<text x="455.8" y="577.7" text-anchor="middle" letter-spacing="0.15">14Jul 00z</text>
<text x="553.4" y="577.7" text-anchor="middle" letter-spacing="0.15">16Jul 00z</text>
<text x="651.1" y="577.7" text-anchor="middle" letter-spacing="0.15">18Jul 00z</text>
<text x="748.8" y="577.7" text-anchor="middle" letter-spacing="0.15">20Jul 00z</text>
<text x="486.4" y="593" text-anchor="middle">Date (UTC)</text>
<text transform="translate(135.1,296) rotate(-90)" text-anchor="middle">850 hPa Temp. (°C)</text>
<text transform="translate(842.8,295.4) rotate(-90)" text-anchor="middle">Neerslag (mm)</text>
</g>
<text x="155.6" y="16.7" fill="#fff" font-family="DejaVu Sans, Liberation Sans, sans-serif" font-size="16.05px" font-weight="bold" xml:space="preserve">Skopje  (MK)  850 hPa Temp. &amp; Neerslag | Mon, 08Jul2024 06Z</text>
<text x="120" y="604.2" fill="#fff" font-family="DejaVu Sans, Liberation Sans, sans-serif" font-size="16.12px">GFS Ensemble, 42N, 21.5E</text>
<text x="650.2" y="604" fill="#fff" font-family="DejaVu Sans, Liberation Sans, sans-serif" font-size="16.08px">Wetterzentrale.de</text>
<g fill="#fff" font-family="DejaVu Sans, Liberation Sans, sans-serif" font-size="10.4px" letter-spacing="0.15">
<line x1="0" y1="40.6" x2="8" y2="40.6" stroke="#0030e8" stroke-width="2"/>
<text x="8.2" y="43.8">P1</text>
<line x1="53" y1="40.6" x2="64" y2="40.6" stroke="#0058dc" stroke-width="2"/>
<text x="64.4" y="43.8">P2</text>
<line x1="0" y1="55.7" x2="8" y2="55.7" stroke="#0078d0" stroke-width="2"/>
<text x="8.2" y="58.9">P3</text>
<line x1="53" y1="55.7" x2="64" y2="55.7" stroke="#00a0c8" stroke-width="2"/>
<text x="64.4" y="58.9">P4</text>
<line x1="0" y1="70.7" x2="8" y2="70.7" stroke="#00b0b8" stroke-width="2"/>
<text x="8.2" y="73.9">P5</text>
<line x1="53" y1="70.7" x2="64" y2="70.7" stroke="#00b090" stroke-width="2"/>
<text x="64.4" y="73.9">P6</text>
<line x1="0" y1="85.8" x2="8" y2="85.8" stroke="#00b070" stroke-width="2"/>
<text x="8.2" y="89.0">P7</text>
<line x1="53" y1="85.8" x2="64" y2="85.8" stroke="#00b850" stroke-width="2"/>
<text x="64.4" y="89.0">P8</text>
<line x1="0" y1="100.8" x2="8" y2="100.8" stroke="#00c030" stroke-width="2"/>
<text x="8.2" y="104.0">P9</text>
<line x1="53" y1="100.8" x2="64" y2="100.8" stroke="#00d010" stroke-width="2"/>
<text x="64.4" y="104.0">P10</text>
<line x1="0" y1="115.8" x2="8" y2="115.8" stroke="#c8c800" stroke-width="2"/>
<text x="8.2" y="119.0">P11</text>
<line x1="53" y1="115.8" x2="64" y2="115.8" stroke="#c8b000" stroke-width="2"/>
<text x="64.4" y="119.0">P12</text>
<line x1="0" y1="130.9" x2="8" y2="130.9" stroke="#c8a000" stroke-width="2"/>
<text x="8.2" y="134.1">P13</text>
<line x1="53" y1="130.9" x2="64" y2="130.9" stroke="#c89000" stroke-width="2"/>
<text x="64.4" y="134.1">P14</text>
<line x1="0" y1="146.0" x2="8" y2="146.0" stroke="#c87800" stroke-width="2"/>
<text x="8.2" y="149.2">P15</text>
<line x1="53" y1="146.0" x2="64" y2="146.0" stroke="#c06810" stroke-width="2"/>
<text x="64.4" y="149.2">P16</text>
<line x1="0" y1="161.0" x2="8" y2="161.0" stroke="#c05810" stroke-width="2"/>
<text x="8.2" y="164.2">P17</text>
<line x1="53" y1="161.0" x2="64" y2="161.0" stroke="#c84a1c" stroke-width="2"/>
<text x="64.4" y="164.2">P18</text>
<line x1="0" y1="176.1" x2="8" y2="176.1" stroke="#c03c20" stroke-width="2"/>
<text x="8.2" y="179.2">P19</text>
<line x1="53" y1="176.1" x2="64" y2="176.1" stroke="#a02020" stroke-width="2"/>
<text x="64.4" y="179.2">P20</text>
<line x1="0" y1="191.1" x2="8" y2="191.1" stroke="#0040e0" stroke-width="2"/>
<text x="8.2" y="194.3">P21</text>
<line x1="53" y1="191.1" x2="64" y2="191.1" stroke="#0070d8" stroke-width="2"/>
<text x="64.4" y="194.3">P22</text>
<line x1="0" y1="206.2" x2="8" y2="206.2" stroke="#00a0d0" stroke-width="2"/>
<text x="8.2" y="209.3">P23</text>
<line x1="53" y1="206.2" x2="64" y2="206.2" stroke="#00b8c0" stroke-width="2"/>
<text x="64.4" y="209.3">P24</text>
<line x1="0" y1="221.2" x2="8" y2="221.2" stroke="#00b088" stroke-width="2"/>
<text x="8.2" y="224.4">P25</text>
<line x1="53" y1="221.2" x2="64" y2="221.2" stroke="#00b868" stroke-width="2"/>
<text x="64.4" y="224.4">P26</text>
<line x1="0" y1="236.2" x2="8" y2="236.2" stroke="#00c040" stroke-width="2"/>
<text x="8.2" y="239.4">P27</text>
<line x1="53" y1="236.2" x2="64" y2="236.2" stroke="#00c818" stroke-width="2"/>
<text x="64.4" y="239.4">P28</text>
<line x1="0" y1="251.3" x2="8" y2="251.3" stroke="#00d800" stroke-width="2"/>
<text x="8.2" y="254.5">P29</text>
<line x1="53" y1="251.3" x2="64" y2="251.3" stroke="#d0c800" stroke-width="2"/>
<text x="64.4" y="254.5">P30</text>
<line x1="0" y1="266.0" x2="8" y2="266.0" stroke="#0000ff" stroke-width="2.3"/>
<text x="8.2" y="268.9">Control</text>
<line x1="53" y1="266.0" x2="64" y2="266.0" stroke="#fff" stroke-width="2.3"/>
<text x="64.4" y="268.9">Ens. mean</text>
<line x1="53" y1="292.9" x2="64" y2="292.9" stroke="#ee3138" stroke-width="2.3"/>
<text x="64.4" y="296.4">1991-2020</text>
<text x="64.4" y="306.8">mean</text>
<line x1="0" y1="307" x2="8" y2="307" stroke="#00e000" stroke-width="2.3"/>
<text x="8.2" y="309.8">Oper</text>
</g>
</svg>
</body></html>
